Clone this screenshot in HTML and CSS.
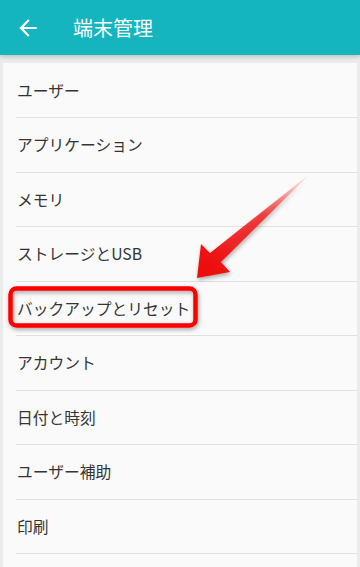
FILE: index.html
```html
<!DOCTYPE html>
<html lang="ja">
<head>
<meta charset="utf-8">
<link rel="stylesheet" href="styles.css">
</head>
<body>
<header class="appbar">
  <svg class="back" viewBox="0 0 24 24" width="26" height="26"><path fill="#fff" d="M20 11H7.83l5.59-5.59L12 4l-8 8 8 8 1.41-1.41L7.83 13H20v-2z"/></svg>
  <h1 class="title">端末管理</h1>
</header>
<main class="content">
  <ul class="list">
    <li class="row first">ユーザー</li>
    <li class="row">アプリケーション</li>
    <li class="row">メモリ</li>
    <li class="row">ストレージとUSB</li>
    <li class="row">バックアップとリセット</li>
    <li class="row">アカウント</li>
    <li class="row">日付と時刻</li>
    <li class="row">ユーザー補助</li>
    <li class="row">印刷</li>
    <li class="row"></li>
  </ul>
</main>
<svg class="overlay" viewBox="0 0 360 567" width="360" height="567">
  <defs>
    <linearGradient id="fade" x1="310" y1="174" x2="205" y2="268" gradientUnits="userSpaceOnUse">
      <stop offset="0" stop-color="#ff1a1a" stop-opacity="0"/>
      <stop offset="0.45" stop-color="#f01818" stop-opacity="0.8"/>
      <stop offset="1" stop-color="#ee1010" stop-opacity="1"/>
    </linearGradient>
    <filter id="sh" x="-20%" y="-20%" width="140%" height="140%">
      <feDropShadow dx="1" dy="2" stdDeviation="2" flood-color="#000" flood-opacity="0.35"/>
    </filter>
  </defs>
  <g filter="url(#sh)">
    <path d="M311 173 L221 262 L230 272 L197 278 L201 244 L210 253 Z" fill="url(#fade)"/>
  </g>
  <rect x="10.5" y="288.5" width="185" height="37" rx="6" ry="6" fill="none" stroke="#ff0000" stroke-width="4.5" filter="url(#sh)"/>
</svg>
</body>
</html>
```
FILE: styles.css
```css
* { box-sizing: border-box; }
html, body {
  margin: 0;
  padding: 0;
}
body {
  width: 360px;
  height: 567px;
  overflow: hidden;
  background: #ebebeb;
  font-family: "Noto Sans CJK JP", "Noto Sans", "Liberation Sans", sans-serif;
  position: relative;
}
.appbar {
  height: 55px;
  background: #14b5bf;
  display: flex;
  align-items: center;
  padding-left: 15px;
  box-shadow: 0 2px 4px rgba(0,0,0,0.18);
  position: relative;
  z-index: 1;
}
.back {
  display: block;
  flex: none;
}
.title {
  margin: 0 0 0 32px;
  font-size: 20px;
  font-weight: 400;
  color: #fff;
  line-height: 1;
}
.content {
  padding: 8px 3px 0 3px;
}
.list {
  list-style: none;
  margin: 0;
  padding: 0 0 0 13px;
  background: #fafafa;
}
.row {
  height: 54.5px;
  display: flex;
  align-items: center;
  padding-left: 1px;
  border-bottom: 1px solid #e0e0e0;
  font-size: 15.75px;
  color: #353535;
}
.row.first {
  height: 55px;
}
.overlay {
  position: absolute;
  left: 0;
  top: 0;
  pointer-events: none;
}
```
